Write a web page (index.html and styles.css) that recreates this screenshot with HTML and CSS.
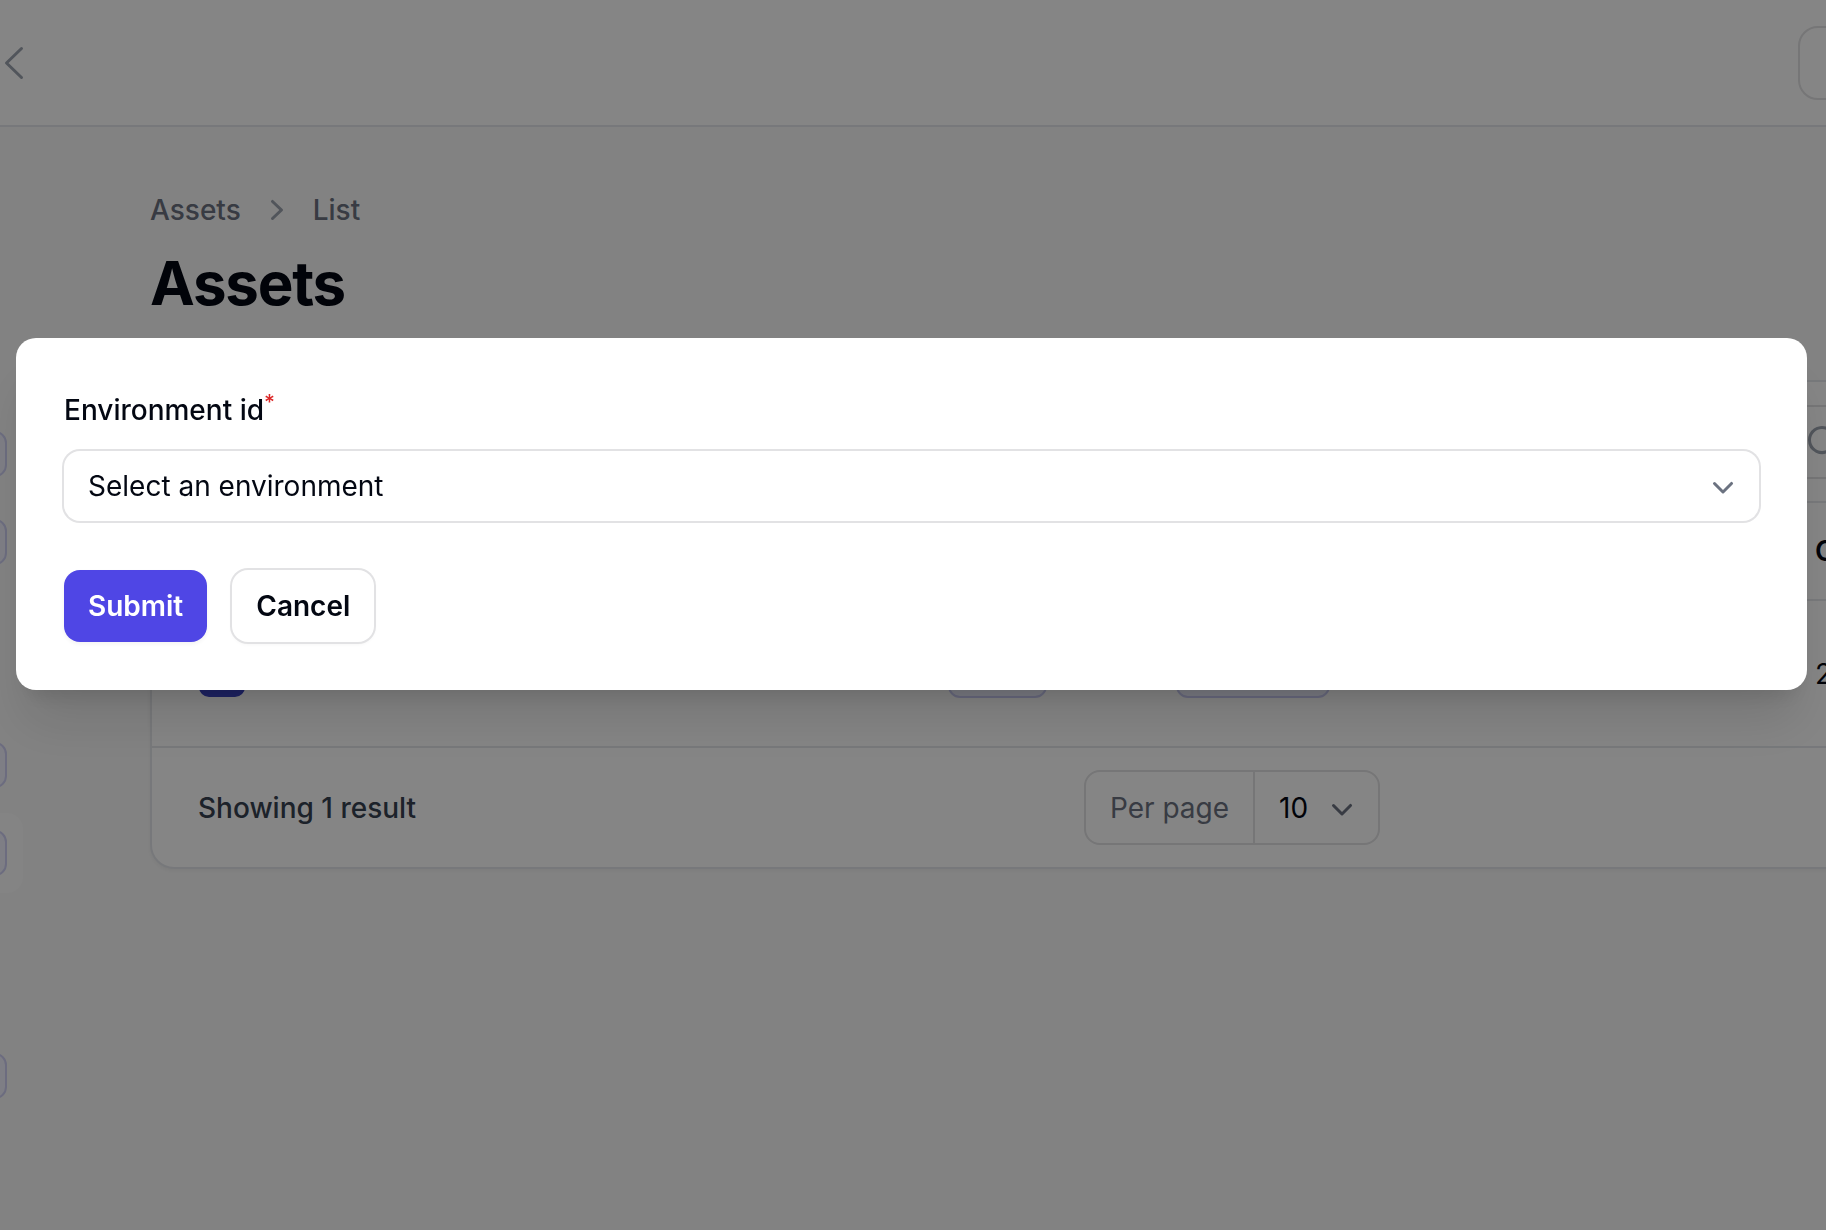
FILE: index.html
```html
<!DOCTYPE html>
<html lang="en">
<head>
<meta charset="utf-8">
<title>Assets - List</title>
<link rel="stylesheet" href="styles.css">
</head>
<body>
<header class="topbar">
  <svg class="back-icon" width="20" height="34" viewBox="0 0 20 34" fill="none" stroke="currentColor" stroke-width="3" stroke-linecap="round" stroke-linejoin="round"><path d="M17.5 2.5 L2.5 17 L17.5 31.5"/></svg>
  <div class="topbar-box"></div>
</header>
<div class="layout">
  <aside class="sidebar">
    <div class="nav-group">
      <span class="nav-item"></span>
      <span class="nav-item"></span>
    </div>
    <div class="nav-group">
      <span class="nav-item"></span>
      <span class="nav-active"><span class="nav-item"></span></span>
    </div>
    <div class="nav-group">
      <span class="nav-item"></span>
    </div>
  </aside>
  <main class="main">
    <nav class="breadcrumbs">
      <span>Assets</span>
      <svg class="crumb-sep" width="40" height="40" viewBox="0 0 20 20" fill="currentColor"><path fill-rule="evenodd" d="M7.21 14.77a.75.75 0 0 1 .02-1.06L11.168 10 7.23 6.29a.75.75 0 1 1 1.04-1.08l4.5 4.25a.75.75 0 0 1 0 1.08l-4.5 4.25a.75.75 0 0 1-1.06-.02Z"/></svg>
      <span>List</span>
    </nav>
    <h1 class="title">Assets</h1>
    <section class="card">
      <div class="toolbar">
        <div class="search">
          <svg class="search-icon" width="40" height="40" viewBox="0 0 20 20" fill="currentColor"><path fill-rule="evenodd" d="M9 3.5a5.5 5.5 0 1 0 0 11 5.5 5.5 0 0 0 0-11ZM2 9a7 7 0 1 1 12.452 4.391l3.328 3.329a.75.75 0 1 1-1.06 1.06l-3.329-3.328A7 7 0 0 1 2 9Z"/></svg>
          <span class="search-ph">Search</span>
        </div>
      </div>
      <div class="row-grid thead">
        <span class="cb"></span>
        <span class="th">Name</span>
        <span class="th">Type</span>
        <span class="th">Status</span>
        <span class="th">Created at</span>
      </div>
      <div class="row-grid trow">
        <span class="cb cb-on"></span>
        <span class="td">Main website</span>
        <span class="badge badge-a"></span>
        <span class="badge badge-b"></span>
        <span class="td">2024-05-14 09:32:11</span>
      </div>
      <div class="footer">
        <span class="showing">Showing 1 result</span>
        <div class="per-page">
          <span class="pp-label">Per page</span>
          <span class="pp-value">10
            <svg class="pp-chev" width="40" height="40" viewBox="0 0 20 20" fill="currentColor"><path fill-rule="evenodd" d="M5.22 8.22a.75.75 0 0 1 1.06 0L10 11.94l3.72-3.72a.75.75 0 1 1 1.06 1.06l-4.25 4.25a.75.75 0 0 1-1.06 0L5.22 9.28a.75.75 0 0 1 0-1.06Z"/></svg>
          </span>
        </div>
        <span></span>
      </div>
    </section>
  </main>
</div>
<div class="overlay"></div>
<div class="modal">
  <label class="field-label">Environment id<sup class="req">*</sup></label>
  <div class="select">
    <span>Select an environment</span>
    <svg class="select-chev" width="40" height="40" viewBox="0 0 20 20" fill="currentColor"><path fill-rule="evenodd" d="M5.22 8.22a.75.75 0 0 1 1.06 0L10 11.94l3.72-3.72a.75.75 0 1 1 1.06 1.06l-4.25 4.25a.75.75 0 0 1-1.06 0L5.22 9.28a.75.75 0 0 1 0-1.06Z"/></svg>
  </div>
  <div class="actions">
    <button class="btn btn-primary">Submit</button>
    <button class="btn btn-secondary">Cancel</button>
  </div>
</div>
</body>
</html>
```
FILE: styles.css
```css
* { box-sizing: border-box; }
html, body { margin: 0; padding: 0; }
body {
  width: 1826px;
  height: 1230px;
  overflow: hidden;
  background: #fafafa;
  font-family: Inter, "Noto Sans", sans-serif;
  color: #030712;
}

.topbar {
  height: 127px;
  background: #ffffff;
  border-bottom: 2px solid #e5e7eb;
  display: flex;
  align-items: center;
  justify-content: space-between;
}
.back-icon { margin-left: 4px; color: #9ca3af; display: block; }
.topbar-box {
  width: 100px;
  height: 74px;
  margin-right: -72px;
  border: 2px solid #e2e2e4;
  border-radius: 20px;
  background: #fff;
}

.layout { display: flex; align-items: flex-start; }

.sidebar {
  width: 24px;
  flex: none;
  overflow: hidden;
  padding-top: 304px;
  height: 1103px;
  display: flex;
  flex-direction: column;
  gap: 177px;
}
.nav-group { display: flex; flex-direction: column; gap: 42px; }
.nav-item {
  display: block;
  width: 40px;
  height: 46px;
  margin-left: -33px;
  border-radius: 12px;
  background: #f1f1ff;
  border: 2px solid #cfd0f3;
}
.nav-active {
  display: block;
  width: 72px;
  margin: -17px 0 -17px -49px;
  padding: 17px 16px;
  border-radius: 16px;
  background: #fdfdfd;
}
.nav-active .nav-item { margin-left: 0; }

.main {
  flex: none;
  padding: 63px 0 0 126px;
}

.breadcrumbs {
  display: flex;
  align-items: center;
  gap: 16px;
  font-size: 28px;
  line-height: 40px;
  font-weight: 500;
  color: #6b7280;
}
.crumb-sep { color: #9ca3af; display: block; }

.title {
  margin: 17px 0 0;
  font-size: 60px;
  line-height: 72px;
  font-weight: 700;
  letter-spacing: -0.02em;
  color: #030712;
}

.card {
  margin-top: 61px;
  width: 2164px;
  background: #ffffff;
  border: 2px solid #e5e7eb;
  border-radius: 24px;
  box-shadow: 0 2px 4px rgba(0,0,0,0.05);
  overflow: hidden;
}

.toolbar {
  display: flex;
  padding: 23px 0 22px 1626px;
  border-bottom: 2px solid #e5e7eb;
}
.search {
  width: 486px;
  height: 74px;
  border: 2px solid #e2e2e4;
  border-radius: 16px;
  display: flex;
  align-items: center;
  padding-left: 24px;
  gap: 12px;
  font-size: 28px;
  color: #9ca3af;
}
.search-icon { display: block; color: #9ca3af; }

.row-grid {
  display: grid;
  grid-template-columns: 46px 703px 228px 639px 1fr;
  align-items: center;
  padding-left: 47px;
  border-bottom: 2px solid #e5e7eb;
}
.thead { height: 98px; }
.trow { height: 147px; }
.th {
  font-size: 28px;
  line-height: 40px;
  font-weight: 600;
  color: #030712;
}
.td {
  font-size: 28px;
  line-height: 40px;
  color: #030712;
}
.cb {
  display: block;
  width: 46px;
  height: 46px;
  border-radius: 10px;
  border: 2px solid #d1d5db;
  background: #fff;
}
.cb-on { background: #3a43c2; border-color: #3a43c2; }
.badge {
  display: block;
  height: 48px;
  border-radius: 12px;
  background: #eef0ff;
  border: 2px solid #c9cbf3;
}
.badge-a { width: 99px; }
.badge-b { width: 154px; }

.footer {
  display: grid;
  grid-template-columns: 1fr auto 1fr;
  align-items: center;
  padding: 22px 46px;
}
.showing {
  font-size: 28px;
  line-height: 40px;
  font-weight: 500;
  color: #374151;
}
.per-page {
  display: flex;
  align-items: center;
  height: 75px;
  border: 2px solid #e2e2e4;
  border-radius: 16px;
  font-size: 28px;
  line-height: 40px;
}
.pp-label {
  padding: 0 24px;
  height: 100%;
  display: flex;
  align-items: center;
  color: #6b7280;
  border-right: 2px solid #e2e2e4;
}
.pp-value {
  display: flex;
  align-items: center;
  gap: 14px;
  padding: 0 16px 0 24px;
  color: #030712;
}
.pp-chev { display: block; color: #6b7280; }

.overlay {
  position: fixed;
  inset: 0;
  background: rgba(0,0,0,0.48);
}

.modal {
  position: fixed;
  left: 16px;
  top: 338px;
  width: 1791px;
  padding: 48px;
  background: #ffffff;
  border-radius: 20px;
  box-shadow: 0 40px 50px -10px rgba(0,0,0,0.12), 0 16px 20px -12px rgba(0,0,0,0.12);
  display: flex;
  flex-direction: column;
}
.field-label {
  font-size: 28px;
  line-height: 48px;
  font-weight: 500;
  color: #030712;
}
.req {
  color: #dc2626;
  font-weight: 500;
  font-size: 75%;
  line-height: 0;
  position: relative;
  vertical-align: baseline;
  top: -0.5em;
}
.select {
  margin-top: 17px;
  height: 70px;
  box-shadow: 0 0 0 2px #e2e2e4;
  border-radius: 16px;
  display: flex;
  align-items: center;
  justify-content: space-between;
  padding: 0 16px 0 24px;
  font-size: 28px;
  line-height: 40px;
  color: #030712;
}
.select-chev { display: block; color: #6b7280; }

.actions {
  margin-top: 49px;
  display: flex;
  gap: 25px;
}
.btn {
  font-family: Inter, "Noto Sans", sans-serif;
  font-size: 28px;
  line-height: 40px;
  font-weight: 600;
  padding: 16px 24px;
  border-radius: 16px;
  border: none;
  margin: 0;
}
.btn-primary {
  background: #4f46e5;
  color: #ffffff;
  box-shadow: 0 2px 4px rgba(0,0,0,0.05);
}
.btn-secondary {
  background: #ffffff;
  color: #030712;
  box-shadow: 0 0 0 2px #e2e2e4, 0 2px 4px rgba(0,0,0,0.05);
}
```
